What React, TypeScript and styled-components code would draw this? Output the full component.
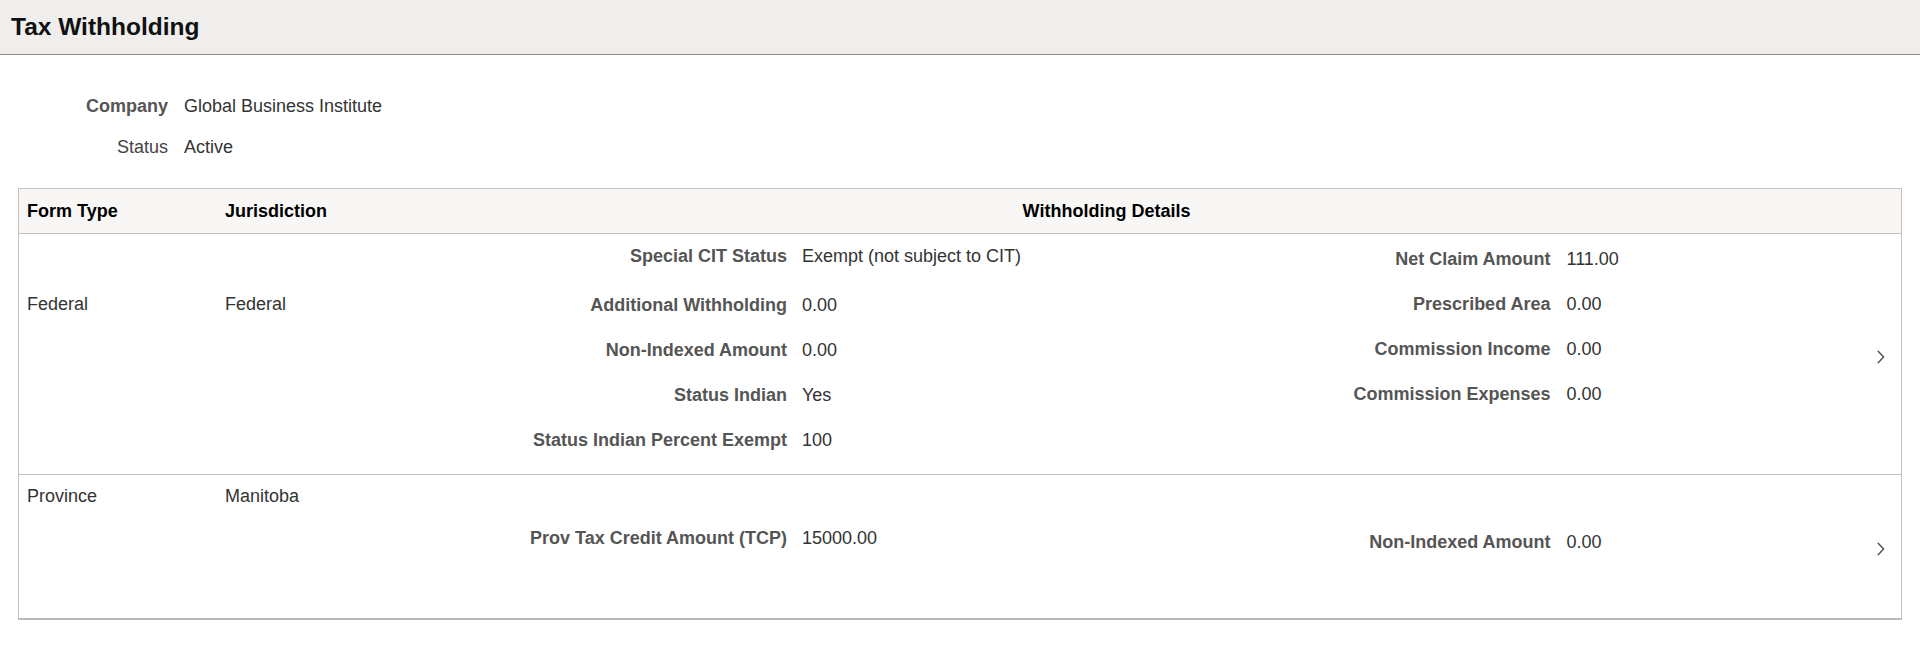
import React from "react";
import styled, { createGlobalStyle } from "styled-components";

const GlobalStyle = createGlobalStyle`
  html, body {
    margin: 0;
    padding: 0;
    background: #fff;
  }
  body {
    font-family: "Liberation Sans", Arial, sans-serif;
    font-size: 18px;
    line-height: 20px;
    color: #333;
  }
`;

type Field = { label: string; value: string; tall?: boolean };

type TaxRow = {
  formType: string;
  jurisdiction: string;
  cellTop: number;
  left: { top: number; bottom: number; fields: Field[] };
  right: { top: number; fields: Field[] };
};

const rows: TaxRow[] = [
  {
    formType: "Federal",
    jurisdiction: "Federal",
    cellTop: 60,
    left: {
      top: 12,
      bottom: 24,
      fields: [
        { label: "Special CIT Status", value: "Exempt (not subject to CIT)", tall: true },
        { label: "Additional Withholding", value: "0.00" },
        { label: "Non-Indexed Amount", value: "0.00" },
        { label: "Status Indian", value: "Yes" },
        { label: "Status Indian Percent Exempt", value: "100" },
      ],
    },
    right: {
      top: 15,
      fields: [
        { label: "Net Claim Amount", value: "111.00" },
        { label: "Prescribed Area", value: "0.00" },
        { label: "Commission Income", value: "0.00" },
        { label: "Commission Expenses", value: "0.00" },
      ],
    },
  },
  {
    formType: "Province",
    jurisdiction: "Manitoba",
    cellTop: 11,
    left: {
      top: 53,
      bottom: 70,
      fields: [{ label: "Prov Tax Credit Amount (TCP)", value: "15000.00" }],
    },
    right: {
      top: 57,
      fields: [{ label: "Non-Indexed Amount", value: "0.00" }],
    },
  },
];

const PageHeader = styled.header`
  height: 41px;
  padding: 13px 11px 0;
  background: #efeeec;
  border-bottom: 1px solid #8f8b87;
`;

const Title = styled.h1`
  margin: 0;
  font-size: 24.5px;
  line-height: 28px;
  font-weight: 700;
  color: #111;
`;

const Summary = styled.dl`
  display: grid;
  grid-template-columns: 168px auto;
  justify-content: start;
  column-gap: 16px;
  row-gap: 21px;
  margin: 41px 0 0;
`;

const SummaryLabel = styled.dt<{ $bold?: boolean }>`
  margin: 0;
  text-align: right;
  font-weight: ${(p) => (p.$bold ? 700 : 400)};
  color: ${(p) => (p.$bold ? "#555" : "#444")};
`;

const SummaryValue = styled.dd`
  margin: 0;
  color: #333;
`;

const Table = styled.section`
  margin: 31px 18px 0;
  border: 1px solid #c6c1bc;
  border-bottom: 2px solid #bdb8b3;
`;

const Columns = `
  display: grid;
  grid-template-columns: 198px 145px 1fr 50px;
`;

const HeadRow = styled.div`
  ${Columns}
  background: #f8f7f6;
  border-bottom: 1px solid #c6c1bc;
`;

const HeadCell = styled.div<{ $center?: boolean }>`
  padding: 12px 8px;
  font-weight: 700;
  color: #000;
  text-align: ${(p) => (p.$center ? "center" : "left")};
`;

const BodyRow = styled.div`
  ${Columns}
  border-bottom: 1px solid #c6c1bc;
  &:last-child {
    border-bottom: none;
  }
`;

const Cell = styled.div<{ $top: number }>`
  padding: ${(p) => p.$top}px 8px 0;
  color: #333;
`;

const Details = styled.div`
  display: grid;
  grid-template-columns: 1fr 1fr;
`;

const FieldGroup = styled.div<{ $top: number; $bottom?: number }>`
  display: flex;
  flex-direction: column;
  gap: 25px;
  padding-top: ${(p) => p.$top}px;
  padding-bottom: ${(p) => p.$bottom ?? 0}px;
`;

const FieldRow = styled.div<{ $labelWidth: number; $gap: number; $tall?: boolean }>`
  display: grid;
  grid-template-columns: ${(p) => p.$labelWidth}px 1fr;
  column-gap: ${(p) => p.$gap}px;
  align-items: start;
  min-height: ${(p) => (p.$tall ? 24 : 20)}px;
`;

const FieldLabel = styled.span`
  text-align: right;
  font-weight: 700;
  color: #555;
  white-space: nowrap;
`;

const FieldValue = styled.span`
  color: #333;
  white-space: nowrap;
`;

const ChevronCell = styled.div`
  display: flex;
  align-items: center;
  justify-content: flex-end;
  padding: 5px 16px 0 0;
  color: #555;
`;

function Chevron() {
  return (
    <svg width="8" height="14" viewBox="0 0 8 14" aria-hidden="true">
      <polyline
        points="1.2,1.2 6.6,7 1.2,12.8"
        fill="none"
        stroke="currentColor"
        strokeWidth="1.5"
        strokeLinecap="round"
        strokeLinejoin="round"
      />
    </svg>
  );
}

function Fields({
  fields,
  labelWidth,
  gap,
  top,
  bottom,
}: {
  fields: Field[];
  labelWidth: number;
  gap: number;
  top: number;
  bottom?: number;
}) {
  return (
    <FieldGroup $top={top} $bottom={bottom}>
      {fields.map((f) => (
        <FieldRow key={f.label} $labelWidth={labelWidth} $gap={gap} $tall={f.tall}>
          <FieldLabel>{f.label}</FieldLabel>
          <FieldValue>{f.value}</FieldValue>
        </FieldRow>
      ))}
    </FieldGroup>
  );
}

export default function App() {
  return (
    <>
      <GlobalStyle />
      <PageHeader>
        <Title>Tax Withholding</Title>
      </PageHeader>

      <Summary>
        <SummaryLabel $bold>Company</SummaryLabel>
        <SummaryValue>Global Business Institute</SummaryValue>
        <SummaryLabel>Status</SummaryLabel>
        <SummaryValue>Active</SummaryValue>
      </Summary>

      <Table>
        <HeadRow>
          <HeadCell>Form Type</HeadCell>
          <HeadCell>Jurisdiction</HeadCell>
          <HeadCell $center>Withholding Details</HeadCell>
          <div />
        </HeadRow>
        {rows.map((r) => (
          <BodyRow key={r.formType}>
            <Cell $top={r.cellTop}>{r.formType}</Cell>
            <Cell $top={r.cellTop}>{r.jurisdiction}</Cell>
            <Details>
              <Fields
                fields={r.left.fields}
                labelWidth={425}
                gap={15}
                top={r.left.top}
                bottom={r.left.bottom}
              />
              <Fields fields={r.right.fields} labelWidth={444} gap={16} top={r.right.top} />
            </Details>
            <ChevronCell>
              <Chevron />
            </ChevronCell>
          </BodyRow>
        ))}
      </Table>
    </>
  );
}
